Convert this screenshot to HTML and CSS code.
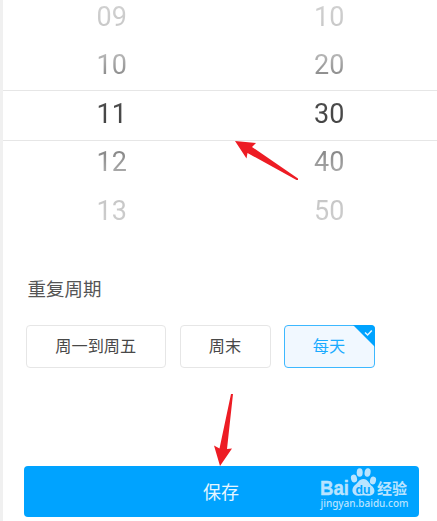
FILE: index.html
```
<!DOCTYPE html>
<html lang="zh-CN">
<head>
    <meta charset="UTF-8">
    <title>重复周期</title>
    <link rel="stylesheet" href="styles.css">
</head>
<body>
<div id="box">
    <div class="picker">
        <ul>
            <li class="far top">09</li>
            <li class="near top">10</li>
            <li class="now">11</li>
            <li class="near">12</li>
            <li class="far">13</li>
        </ul>
        <ul>
            <li class="far top">10</li>
            <li class="near top">20</li>
            <li class="now">30</li>
            <li class="near">40</li>
            <li class="far">50</li>
        </ul>
        <div class="line"></div>
    </div>
    <h3>重复周期</h3>
    <div class="cycle">
        <span class="week">周一到周五</span>
        <span>周末</span>
        <span class="active">每天
            <svg width="22" height="22" viewBox="0 0 22 22">
                <path d="M0 0H18Q22 0 22 4V22Z" fill="#00a3ff"/>
                <path d="M12 7.5L14.6 10L18.8 5.4" fill="none" stroke="#e6f6ff" stroke-width="1.5"/>
            </svg>
        </span>
    </div>
    <div class="save">保存</div>
</div>
<!-- 箭头 -->
<svg class="arrow" width="437" height="521" viewBox="0 0 437 521">
    <path d="M235 141L256 143L252 147L298 178.5V180L296.500 180L247.500 153L246.500 158.500Z"/>
    <path d="M231 394H233L227 449L232 448.500L220 466L214 445.500L219.500 448.500Z"/>
</svg>
<!-- 水印 -->
<svg class="mark" width="96" height="50" viewBox="316 466 96 50">
    <text class="bai" x="320" y="495" textLength="29" lengthAdjust="spacingAndGlyphs">Bai</text>
    <ellipse cx="354" cy="478.500" rx="3" ry="4" transform="rotate(-15 354 478.5)"/>
    <ellipse cx="359.700" cy="472.500" rx="3" ry="4.300"/>
    <ellipse cx="367.600" cy="472.500" rx="3" ry="4.300" transform="rotate(10 367.6 472.5)"/>
    <ellipse cx="373" cy="480.500" rx="3" ry="4" transform="rotate(15 373 480.5)"/>
    <path d="M363.500 479C359 479 358 483 355 485C350.500 489 352 496 358.500 495.700C362 495 365 495 368 495.700C375 496 376 490 372.500 486.500C369 484 368 479 363.500 479Z"/>
    <text class="du" x="355.500" y="493.500" textLength="15" lengthAdjust="spacingAndGlyphs">du</text>
    <text class="jy" x="377" y="494" textLength="30">经验</text>
    <text class="url" x="320.500" y="506.500" textLength="88" lengthAdjust="spacingAndGlyphs">jingyan.baidu.com</text>
</svg>
</body>
</html>
```
FILE: styles.css
```
body,div,ul,li,h3{
    margin:0;
    padding:0;
    list-style: none;
}
body{
    background-color:#fff;
    font-family: "Noto Sans CJK SC",sans-serif;
    overflow: hidden;
}
#box{
    box-sizing: border-box;
    height:521px;
    border-left:3px solid #f0f0f0;
}
.picker{
    position: relative;
    display: flex;
    height:235px;
    overflow: hidden;
}
.picker ul{
    flex:none;
    width:217.5px;
    margin-top:-7.5px;
    text-align: center;
    font-family: Roboto,sans-serif;
    font-size:27px;
}
.picker li{
    height:48.5px;
    line-height:48.5px;
    color:transparent;
    background-image: linear-gradient(#8a8a8a 30%,#aaa 70%);
    -webkit-background-clip: text;
    background-clip: text;
}
.picker .top{
    background-image: linear-gradient(#b4b4b4 30%,#8c8c8c 70%);
}
.picker .far{
    background-image: linear-gradient(#c4c4c4,#d0d0d0);
}
.picker .far.top{
    background-image: linear-gradient(#d4d4d4,#c4c4c4);
}
.picker .now{
    background-image: linear-gradient(#505050,#404040);
}
.line{
    position: absolute;
    left:0;
    top:90px;
    width:100%;
    height:49px;
    border-top:1px solid #e6e6e6;
    border-bottom:1px solid #e6e6e6;
}
h3{
    margin:40px 0 0 24.5px;
    font-size:18.5px;
    line-height:26px;
    font-weight:normal;
    color:#555;
}
.cycle{
    display: flex;
    gap:14px;
    margin:24px 0 0 23px;
}
.cycle span{
    box-sizing: border-box;
    position: relative;
    width:91px;
    height:43px;
    border:1px solid #e6e6e6;
    border-radius:4px;
    font-size:16.2px;
    line-height:39px;
    text-align: center;
    color:#484848;
}
.cycle .week{
    width:139.5px;
}
.cycle .active{
    margin-left:-1px;
    border-color:#3db8ff;
    background-color:#f1f8ff;
    color:#1aabff;
}
.cycle svg{
    position: absolute;
    right:-1px;
    top:-1px;
}
.save{
    width:395px;
    height:51px;
    margin:98px 0 0 20.5px;
    border-radius:4px;
    background-color:#00a3ff;
    font-size:18px;
    line-height:50px;
    text-align: center;
    color:#e6f6ff;
}
.arrow{
    position: absolute;
    left:0;
    top:0;
    fill:#ed1c24;
}
.mark{
    position: absolute;
    left:316px;
    top:466px;
    fill:#b9e4ff;
}
.bai{
    font:bold 20px "Liberation Sans",sans-serif;
    stroke:#b9e4ff;
    stroke-width:.4px;
}
.du{
    font:bold 13px "Liberation Sans",sans-serif;
    fill:#00a3ff;
}
.jy{
    font:bold 15px "Noto Sans CJK SC",sans-serif;
}
.url{
    font:500 11px "Noto Sans",sans-serif;
}
```
